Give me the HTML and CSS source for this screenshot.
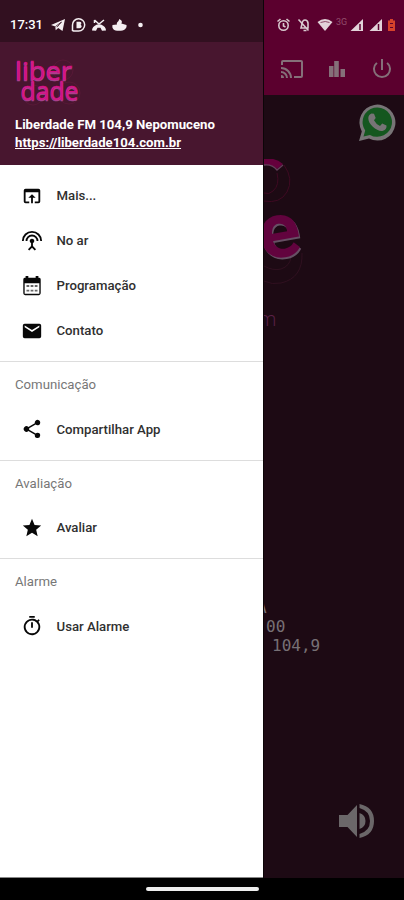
FILE: index.html
```
<!DOCTYPE html>
<html lang="pt-BR">
<head>
<meta charset="utf-8">
<title>Liberdade FM 104,9</title>
<link rel="stylesheet" href="styles.css">
</head>
<body>
<div class="screen">
  <div class="panes">
    <aside class="drawer">
      <div class="status status-left">
        <span class="time">17:31</span>
        <svg class="status-icons" viewBox="0 0 100 20" fill="#f4eef1">
          <path d="M0 10L14 4l-2.500 12-4.300-3-2.500 2.200-.4-3.700z"/><path d="M4.500 11.500l6-4.500-4.500 5.200" stroke="#321020" stroke-width=".8" fill="none"/>
          <path d="M21.500 15.500V10a6.100 6.100 0 1 1 6.100 6h-5z" fill="none" stroke="#f4eef1" stroke-width="1.500"/><path d="M25.500 6.700h3.200q2 .2 1.600 1.800 0 1-.8 1.300 1.200.4 1.200 1.700-.2 1.800-2.200 1.800h-3z"/>
          <path d="M43.500 5l4.500 4 5-4M43.500 5v3" fill="none" stroke="#f4eef1" stroke-width="1.500"/><path d="M41 15.500q0-4 5-6h4q5 2 5 6l-4 .3-1.500-3h-3l-1.500 3z"/>
          <path d="M68 4c3 1 3.500 3 2.300 4.500L75.500 10c.6 3.500-2 5.800-7.500 5.800S60.800 13.500 61.500 10l4.500-.5C65 7 68.500 6.500 68 4z"/>
          <circle cx="89.500" cy="10" r="2.300"/>
        </svg>
      </div>
      <header class="profile">
        <svg class="logo" viewBox="0 0 66 50">
          <g fill="none" stroke="#5a1939" stroke-width=".8"><circle cx="48" cy="11" r="10"/><circle cx="54" cy="34" r="11"/><circle cx="18" cy="36" r="10"/></g>
          <g class="logo-small">
            <text x="0" y="21" textLength="57" lengthAdjust="spacingAndGlyphs">liber</text>
            <text x="5.500" y="41" textLength="58" lengthAdjust="spacingAndGlyphs">dade</text>
          </g>
        </svg>
        <div class="station">Liberdade FM 104,9 Nepomuceno</div>
        <a class="site">https://liberdade104.com.br</a>
      </header>
      <nav class="menu">
        <div class="item"><svg viewBox="0 0 24 24"><path d="M19 4H5a2 2 0 0 0-2 2v12a2 2 0 0 0 2 2h4v-2H5V8h14v10h-4v2h4a2 2 0 0 0 2-2V6a2 2 0 0 0-2-2zm-7 6l-4 4h3v6h2v-6h3z"/></svg><span>Mais...</span></div>
        <div class="item"><svg viewBox="0 0 24 24"><path d="M12 5a7 7 0 0 0-7 7h2a5 5 0 0 1 10 0h2a7 7 0 0 0-7-7zm1 9.290a2.500 2.500 0 1 0-2 0v3.300L7.590 21 9 22.410l3-3 3 3L16.410 21 13 17.590zM12 1A11 11 0 0 0 1 12h2a9 9 0 0 1 18 0h2A11 11 0 0 0 12 1z"/></svg><span>No ar</span></div>
        <div class="item"><svg viewBox="0 0 24 24"><path fill-rule="evenodd" d="M5 3V1h3v2h8V1h3v2h1q1.500.2 1.500 2v15q-.2 2-2 2h-15q-2 0-2-2V5q0-2 1.500-2zM4 9v11.500h16V9z"/><path fill="#666" d="M6 11h3v2H6zm4.500 0h3v2h-3zm4.500 0h3v2h-3zM6 16h3v2H6zm4.500 0h3v2h-3zm4.500 0h3v2h-3z"/></svg><span>Programação</span></div>
        <div class="item"><svg viewBox="0 0 24 24"><path d="M20 4H4a2 2 0 0 0-2 2v12a2 2 0 0 0 2 2h16a2 2 0 0 0 2-2V6a2 2 0 0 0-2-2zm0 4l-8 5-8-5V6l8 5 8-5z"/></svg><span>Contato</span></div>
        <h2>Comunicação</h2>
        <div class="item"><svg viewBox="0 0 24 24"><path d="M18 16.080c-.76 0-1.440.3-1.960.77L8.910 12.700a3.300 3.300 0 0 0 0-1.400l7.050-4.110A3 3 0 1 0 15 5c0 .24.040.47.090.7L8.040 9.810a3 3 0 1 0 0 4.380l7.120 4.160a2.920 2.920 0 1 0 2.840-2.270z"/></svg><span>Compartilhar App</span></div>
        <h2>Avaliação</h2>
        <div class="item"><svg viewBox="0 0 24 24"><path d="M12 17.270L18.180 21l-1.640-7.030L22 9.240l-7.190-.61L12 2 9.190 8.630 2 9.240l5.460 4.730L5.820 21z"/></svg><span>Avaliar</span></div>
        <h2>Alarme</h2>
        <div class="item"><svg viewBox="0 0 24 24"><path d="M15 1H9v2h6zm-4 13h2V8h-2zm8.030-6.610l1.420-1.420a11 11 0 0 0-1.410-1.410l-1.420 1.420A9 9 0 1 0 19.030 7.390zM12 20a7 7 0 1 1 0-14 7 7 0 0 1 0 14z"/></svg><span>Usar Alarme</span></div>
      </nav>
    </aside>
    <main class="player">
      <div class="topbar">
        <div class="status status-right">
          <svg viewBox="0 0 141 20" fill="#e2d3d9">
            <g fill="none" stroke="#d8c8ce" stroke-width="1.600"><circle cx="20.500" cy="10.500" r="4.700"/><path d="M14.500 6.500l3-2.500M26.500 6.500l-3-2.500M20.500 8v3l2 1M38 13h7V8q-.5-3-3-3t-3 4zM35.500 4.500l10 11M40.500 15.500h3"/></g>
            <path d="M54.500 7q7.500-6 15 0l-7.500 9z"/><path d="M57.500 7.500q5-2 9 0" fill="none" stroke="#8c4a68"/>
            <text class="net" x="73" y="10">3G</text>
            <path d="M100 4v12H87.500zM119 4v12h-12.500z"/><path d="M97 9v6M115.500 9v6" stroke="#5b002e" stroke-width="1.500"/>
            <path fill="#d5422b" d="M125 5.500h2V4h3v1.500h2V16h-7z"/><path d="M127 8.500h3M127 12.500h3" stroke="#5b002e" stroke-width="1.200"/>
          </svg>
        </div>
        <div class="actions">
          <svg viewBox="0 0 24 24"><path d="M21 3H3a2 2 0 0 0-2 2v3h2V5h18v14h-7v2h7a2 2 0 0 0 2-2V5a2 2 0 0 0-2-2zM1 18v3h3a3 3 0 0 0-3-3zm0-4v2a5 5 0 0 1 5 5h2a7 7 0 0 0-7-7zm0-4v2a9 9 0 0 1 9 9h2A11 11 0 0 0 1 10z"/></svg>
          <svg viewBox="0 0 24 24"><path d="M4 9h4.500v11H4zm5.200-5h4.600v16H9.200zm6.300 8h4.500v8h-4.500z"/></svg>
          <svg viewBox="0 0 24 24"><path d="M13 2h-2v11h2zm4.830 3.170l-1.420 1.420A7 7 0 1 1 7.580 6.580L6.170 5.170a9 9 0 1 0 11.660 0z"/></svg>
        </div>
      </div>
      <svg class="whatsapp" viewBox="0 0 38 39"><path d="M1 38l2.800-9.500A18 18 0 1 1 11 35.500z" fill="#777476"/><path d="M5.500 33.500l1.700-6A14.700 14.700 0 1 1 12 31.900z" fill="#14571f"/><path d="M13.500 10.500l2.500.3 1.700 4.200-1.700 2.300q2 4 6 5.700l2.200-2.500 4.300 2.100q.5 4-3.500 5.200c-5 1.500-15-6-14.700-12.800q.2-3.300 3.200-4.500z" fill="#777476"/></svg>
      <div class="artwork">
        <svg viewBox="0 0 141 190">
          <g fill="none">
            <path d="M0 0q11-2 19 5l-6 5Q6 5 0 6z" fill="#65003c"/><path d="M0 6q8-1 13 5l6-5" stroke="#63405a" stroke-width="1.300"/>
            <path d="M20 6q10 14 3 27-7 12-23 9M13 14q3 12-4 18-4 4-9 2" stroke="#3e0922"/>
            <path d="M38 94q1 25-21 30-9 2-17-2M27 98q-1 9-10 12-8 2-17-3" stroke="#301020"/>
          </g>
          <g class="logo-large" transform="rotate(-10 17 80)">
            <text x="-5" y="98">e</text>
          </g>
          <text class="tagline" x="-6" y="167">m</text>
        </svg>
      </div>
      <div class="track">
        <div class="line line-name">A</div>
        <div class="line line-hour">00</div>
        <div class="line line-freq">104,9</div>
      </div>
      <svg class="volume" viewBox="0 0 36 36"><path d="M0 12h8.500L18 2v32L8.500 24H0zM20.500 10q6 2 6 8t-6 8zM20.500 1Q35 4 35 18T20.500 35v-4Q31 28 31 18T20.500 5z" fill="#6b6769"/></svg>
    </main>
  </div>
  <div class="navbar"><span class="pill"></span></div>
</div>
</body>
</html>
```
FILE: styles.css
```
* { box-sizing: border-box; }

body {
  margin: 0;
  background: #000;
  font-family: Roboto, "Liberation Sans", sans-serif;
}

svg { display: block; flex: none; }

.screen {
  width: 404px;
  height: 900px;
  display: flex;
  flex-direction: column;
  overflow: hidden;
}

.panes {
  height: 878px;
  display: grid;
  grid-template-columns: 263px 141px;
}

.drawer { background: #fff; border-bottom: 1px solid #888; }

.status { height: 42px; display: flex; align-items: center; padding-top: 7px; }
.status-left { background: #321020; padding-left: 10px; }
.time { width: 41px; font-size: 13px; font-weight: 500; color: #fff; }
.status-icons { width: 100px; height: 20px; }

.profile {
  height: 123px;
  padding: 17px 16px 0 15px;
  background: #48162f;
  color: #fff;
  font-size: 13.2px;
  font-weight: 700;
  line-height: 18px;
}
.logo { width: 66px; height: 50px; margin-bottom: 7px; overflow: visible; }
.logo-small {
  font-family: "Open Sans", sans-serif;
  font-size: 25px;
  font-weight: 400;
  fill: #dc0b86;
  stroke: #dc0b86;
  stroke-width: 0.6px;
  text-shadow: 0 1px 0 #a04b91;
}
.station, .site { display: block; width: max-content; white-space: nowrap; }
.site { text-decoration: underline; }

.menu { padding-top: 8px; }
.item {
  height: 45px;
  display: flex;
  align-items: center;
  padding-left: 21px;
  gap: 13.500px;
  color: #303030;
  font-size: 13.2px;
  font-weight: 500;
}
.item svg { width: 22px; height: 22px; fill: #080808; }
.menu h2 {
  height: 45.6px;
  margin: 8px 0 0;
  padding-left: 15px;
  border-top: 1px solid #ddd;
  line-height: 45px;
  color: #777;
  font-size: 13.2px;
  font-weight: 400;
}

.player {
  display: flex;
  flex-direction: column;
  background: #1d0a14;
  border-left: 1px solid #0c0508;
  overflow: hidden;
}
.topbar { height: 95px; margin-left: -1px; background: #5b002e; }
.status-right svg { width: 141px; height: 20px; }
.net { font-size: 9px; fill: #924e6c; }
.actions { display: flex; gap: 21px; padding: 15px 0 0 17px; }
.actions svg { width: 24px; height: 24px; fill: #857079; }
.whatsapp { width: 38px; height: 39px; margin: 8px 0 0 94px; }
.artwork { height: 190px; margin-top: 17px; }
.artwork svg { width: 141px; height: 190px; }
.logo-large {
  font-family: Roboto, sans-serif;
  font-size: 78px;
  font-weight: 700;
  fill: #62033e;
  text-shadow: 1px 2px 0 #665064;
}
.tagline { font-family: "Open Sans", sans-serif; font-size: 21px; font-weight: 300; fill: #5a2148; }

.track {
  margin-top: 249px;
  font-family: "DejaVu Sans Mono", monospace;
  font-size: 16px;
  line-height: 19px;
  color: #777075;
}
.line-name { margin-left: -7px; }
.line-hour { margin-left: 2px; }
.line-freq { margin-left: 8px; }
.volume { width: 36px; height: 36px; margin: 148px 0 0 75px; }

.navbar {
  height: 22px;
  display: flex;
  justify-content: center;
  padding-top: 9px;
  background: #000;
}
.pill { width: 113px; height: 4px; border-radius: 2px; background: #eee; }
```
